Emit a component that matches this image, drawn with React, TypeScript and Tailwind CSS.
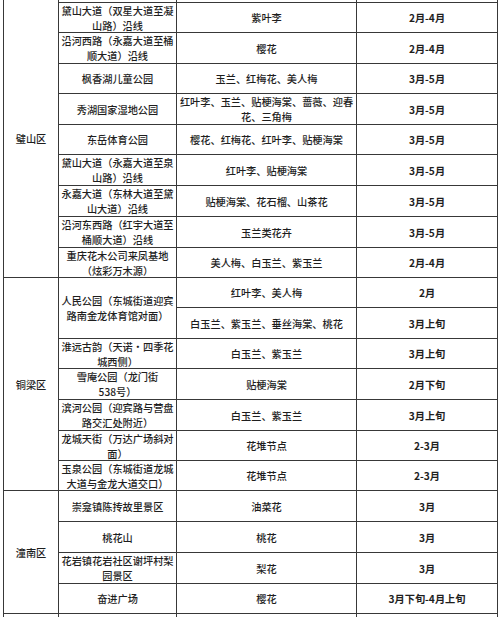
import React from 'react'

type Row = {
  place: string[]
  flower: string[]
  date: string
}

const bishan: Row[] = [
  { place: ['黛山大道（双星大道至凝', '山路）沿线'], flower: ['紫叶李'], date: '2月-4月' },
  { place: ['沿河西路（永嘉大道至桶', '顺大道）沿线'], flower: ['樱花'], date: '2月-4月' },
  { place: ['枫香湖儿童公园'], flower: ['玉兰、红梅花、美人梅'], date: '3月-5月' },
  { place: ['秀湖国家湿地公园'], flower: ['红叶李、玉兰、贴梗海棠、蔷薇、迎春', '花、三角梅'], date: '3月-5月' },
  { place: ['东岳体育公园'], flower: ['樱花、红梅花、红叶李、贴梗海棠'], date: '3月-5月' },
  { place: ['黛山大道（永嘉大道至泉', '山路）沿线'], flower: ['红叶李、贴梗海棠'], date: '3月-5月' },
  { place: ['永嘉大道（东林大道至黛', '山大道）沿线'], flower: ['贴梗海棠、花石榴、山茶花'], date: '3月-5月' },
  { place: ['沿河东西路（红宇大道至', '桶顺大道）沿线'], flower: ['玉兰类花卉'], date: '3月-5月' },
  { place: ['重庆花木公司来凤基地', '（炫彩万木源）'], flower: ['美人梅、白玉兰、紫玉兰'], date: '2月-4月' },
]

const tongliang: Row[] = [
  { place: ['淮远古韵（天诺·四季花', '城西侧）'], flower: ['白玉兰、紫玉兰'], date: '3月上旬' },
  { place: ['雪庵公园（龙门街', '538号）'], flower: ['贴梗海棠'], date: '2月下旬' },
  { place: ['滨河公园（迎宾路与营盘', '路交汇处附近）'], flower: ['白玉兰、紫玉兰'], date: '3月上旬' },
  { place: ['龙城天街（万达广场斜对', '面）'], flower: ['花堆节点'], date: '2-3月' },
  { place: ['玉泉公园（东城街道龙城', '大道与金龙大道交口）'], flower: ['花堆节点'], date: '2-3月' },
]

const tongnan: Row[] = [
  { place: ['崇龛镇陈抟故里景区'], flower: ['油菜花'], date: '3月' },
  { place: ['桃花山'], flower: ['桃花'], date: '3月' },
  { place: ['花岩镇花岩社区谢坪村梨', '园景区'], flower: ['梨花'], date: '3月' },
  { place: ['奋进广场'], flower: ['樱花'], date: '3月下旬-4月上旬' },
]

const cell = 'bg-white flex items-center justify-center text-center'

function Lines({ lines }: { lines: string[] }) {
  return (
    <div>
      {lines.map((l, i) => (
        <div key={i} className="whitespace-nowrap">{l}</div>
      ))}
    </div>
  )
}

function TableRow({ row }: { row: Row }) {
  return (
    <>
      <div className={cell}><Lines lines={row.place} /></div>
      <div className={cell}><Lines lines={row.flower} /></div>
      <div className={`${cell} font-bold`}>{row.date}</div>
    </>
  )
}

export default function App() {
  return (
    <div
      className="h-[617px] w-[500px] overflow-hidden bg-white text-[10.2px] leading-[15px] font-medium text-[#1e1e1e]"
      style={{ fontFamily: '"Noto Sans CJK SC", "Noto Sans", sans-serif' }}
    >
      <div className="ml-[3px] w-[495px] bg-[#383838] px-[1px] pb-[1px]">
        <div className="grid grid-cols-[54px_117px_179px_140px] grid-rows-[2px_29px_30px_29px_30px_29px_30px_30px_30px_29px_29px_30px_29px_30px_30px_29px_29px_30px_30px_30px_29px_30px] gap-[1px]">
          {/* 璧山区 */}
          <div className={`${cell} row-span-10`}>璧山区</div>
          <div className="bg-white" />
          <div className="bg-white" />
          <div className="bg-white" />
          {bishan.map((r, i) => (
            <TableRow key={i} row={r} />
          ))}

          {/* 铜梁区 */}
          <div className={`${cell} row-span-7`}>铜梁区</div>
          <div className={`${cell} row-span-2`}>
            <Lines lines={['人民公园（东城街道迎宾', '路南金龙体育馆对面）']} />
          </div>
          <div className={cell}>红叶李、美人梅</div>
          <div className={`${cell} font-bold`}>2月</div>
          <div className={cell}>白玉兰、紫玉兰、垂丝海棠、桃花</div>
          <div className={`${cell} font-bold`}>3月上旬</div>
          {tongliang.map((r, i) => (
            <TableRow key={i} row={r} />
          ))}

          {/* 潼南区 */}
          <div className={`${cell} row-span-4`}>潼南区</div>
          {tongnan.map((r, i) => (
            <TableRow key={i} row={r} />
          ))}

          <div className="bg-white" />
          <div className="bg-white" />
          <div className="bg-white" />
          <div className="bg-white" />
        </div>
      </div>
    </div>
  )
}
